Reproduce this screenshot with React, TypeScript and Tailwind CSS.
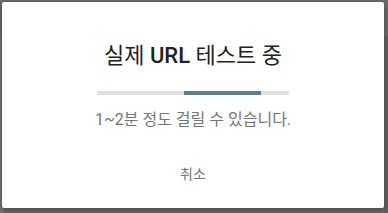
export default function App() {
  const font = { fontFamily: '"Roboto", "Noto Sans CJK KR", sans-serif' };
  return (
    <div className="relative h-[213px] w-[388px] overflow-hidden bg-[#6b6b6b]" style={font}>
      {/* dimmed page behind the dialog */}
      <div className="absolute left-0 top-[36px] h-[177px] w-[4px] bg-[#737373]" />
      <div className="absolute right-0 top-[36px] h-[177px] w-[4px] bg-[#616161]" />
      <div className="relative flex h-full w-full p-[2px] pb-[5px] pr-[4px]">
        <div className="flex flex-1 flex-col items-center rounded-[2px] bg-white shadow-[0_2px_6px_rgba(0,0,0,0.35)]">
          <div className="mt-[39px] text-[22px] leading-[30px] text-[#212121]">
            실제 <span className="font-medium">URL</span> 테스트 중
          </div>
          <div className="mt-[20px] flex h-[4px] w-[192px] bg-[#e0e0e0]">
            <div className="ml-[87px] h-full w-[77px] bg-[#607d8b]" />
          </div>
          <div className="mt-[14px] text-[16px] leading-[22px] text-[#757575]">1~2분 정도 걸릴 수 있습니다.</div>
          <button className="mt-[33px] px-2 text-[14px] leading-[20px] text-[#757575]">취소</button>
        </div>
      </div>
    </div>
  );
}
